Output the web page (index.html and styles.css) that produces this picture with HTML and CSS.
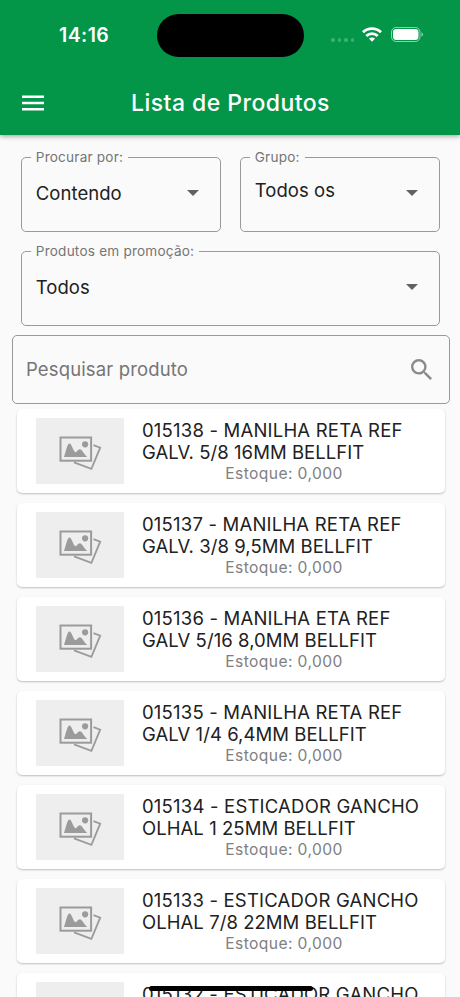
FILE: index.html
```html
<!DOCTYPE html>
<html lang="pt-BR">
<head>
<meta charset="utf-8">
<title>Lista de Produtos</title>
<link rel="stylesheet" href="styles.css">
</head>
<body>
<svg class="defs" width="0" height="0" aria-hidden="true">
  <symbol id="photos" viewBox="0 0 44 36">
    <path d="M34.5 9.2 41.2 11.7 32.4 32.8 15 26.4" fill="none" stroke="#9b9b9b" stroke-width="1.8"/>
    <rect x="1.500" y="1.500" width="30.6" height="23.2" fill="#eee" stroke="#9b9b9b" stroke-width="2"/>
    <path d="M5 21C7 15.500 8.300 7.500 10.500 7.500s3.700 7.500 5.500 8.500S18.500 13.200 20.800 13.200 25 18.500 28.300 21Z" fill="#9b9b9b"/>
    <circle cx="26.100" cy="8.300" r="3.100" fill="#9b9b9b"/>
  </symbol>
</svg>
<div class="screen">
  <header class="top">
    <div class="status">
      <span class="time">14:16</span>
      <span class="island"></span>
      <span class="signals">
        <span class="dots"><i></i><i></i><i></i><i></i></span>
        <svg class="wifi" width="20" height="15" viewBox="0 0 20 15" fill="none" stroke="#fff" stroke-width="2.800"><path d="M1 5.300C6 .5 14 .5 19 5.300"/><path d="M4.300 8.900C7.500 5.800 12.500 5.800 15.700 8.900"/><path d="M10 14.700 6.900 11.600C8.600 10 11.400 10 13.100 11.600Z" fill="#fff" stroke="none"/></svg>
        <svg class="battery" width="33" height="15" viewBox="0 0 33 15"><rect x=".5" y=".5" width="28.500" height="14" rx="4.500" fill="none" stroke="#fff" stroke-opacity=".55"/><rect x="2" y="2" width="25.500" height="11" rx="3.300" fill="#fff"/><path d="M30.500 5.300q1.500.7 1.500 2.200t-1.500 2.200z" fill="#fff" fill-opacity=".6"/></svg>
      </span>
    </div>
    <div class="bar">
      <svg class="menu" width="22" height="16" viewBox="0 0 22 16" fill="#fff"><path d="M0 .5h22v2.400H0zM0 6.800h22v2.400H0zM0 13.100h22v2.400H0z"/></svg>
      <h1>Lista de Produtos</h1>
    </div>
  </header>
  <form class="filters">
    <fieldset class="field"><legend>Procurar por:</legend><span>Contendo</span><b class="caret"></b></fieldset>
    <fieldset class="field group"><legend>Grupo:</legend><span>Todos os</span><b class="caret"></b></fieldset>
    <fieldset class="field wide"><legend>Produtos em promoção:</legend><span>Todos</span><b class="caret"></b></fieldset>
  </form>
  <div class="search">
    <span>Pesquisar produto</span>
    <svg width="21" height="21" viewBox="3 3 17.500 17.500" fill="#8a8a8a"><path d="M15.500 14h-.79l-.28-.27A6.471 6.471 0 0 0 16 9.500 6.500 6.500 0 1 0 9.500 16c1.610 0 3.090-.59 4.230-1.570l.27.28v.79l5 4.990L20.490 19l-4.990-5zm-6 0C7.010 14 5 11.990 5 9.500S7.010 5 9.500 5 14 7.010 14 9.500 11.990 14 9.500 14z"/></svg>
  </div>
  <main class="list">
    <article class="card"><div class="thumb"><svg><use href="#photos"/></svg></div><div class="info"><h2>015138 - MANILHA RETA REF<br>GALV. 5/8 16MM BELLFIT</h2><p>Estoque: 0,000</p></div></article>
    <article class="card"><div class="thumb"><svg><use href="#photos"/></svg></div><div class="info"><h2>015137 - MANILHA RETA REF<br>GALV. 3/8 9,5MM BELLFIT</h2><p>Estoque: 0,000</p></div></article>
    <article class="card"><div class="thumb"><svg><use href="#photos"/></svg></div><div class="info"><h2>015136 - MANILHA ETA REF<br>GALV 5/16 8,0MM BELLFIT</h2><p>Estoque: 0,000</p></div></article>
    <article class="card"><div class="thumb"><svg><use href="#photos"/></svg></div><div class="info"><h2>015135 - MANILHA RETA REF<br>GALV 1/4 6,4MM BELLFIT</h2><p>Estoque: 0,000</p></div></article>
    <article class="card"><div class="thumb"><svg><use href="#photos"/></svg></div><div class="info"><h2>015134 - ESTICADOR GANCHO<br>OLHAL 1 25MM BELLFIT</h2><p>Estoque: 0,000</p></div></article>
    <article class="card"><div class="thumb"><svg><use href="#photos"/></svg></div><div class="info"><h2>015133 - ESTICADOR GANCHO<br>OLHAL 7/8 22MM BELLFIT</h2><p>Estoque: 0,000</p></div></article>
    <article class="card"><div class="thumb"></div><div class="info"><h2>015132 - ESTICADOR GANCHO</h2></div></article>
  </main>
  <div class="home"></div>
</div>
</body>
</html>
```
FILE: styles.css
```css
* { box-sizing: border-box; }
body { margin: 0; font-family: Inter, "Liberation Sans", sans-serif; color: #212121; }
h1, h2, p { margin: 0; font-weight: 400; }
.defs { position: absolute; }
.screen { position: relative; width: 460px; height: 997px; overflow: hidden; background: #fafafa; display: flex; flex-direction: column; }
.top { height: 135px; flex: none; background: #039649; color: #fff; box-shadow: 0 1px 5px rgba(0,0,0,.4); }
.status { height: 70px; display: grid; grid-template-columns: 157px 147px 156px; align-items: center; }
.time { padding-left: 59px; font-size: 19.5px; font-weight: 600; letter-spacing: .4px; }
.island { height: 43px; border-radius: 22px; background: #000; }
.signals { display: flex; align-items: center; padding: 0 0 1px 27px; }
.dots { display: flex; gap: 3px; margin: 11px 8px 0 0; }
.dots i { width: 3.5px; height: 3.5px; border-radius: 1.5px; background: #3bb071; }
.battery { margin-left: 9px; }
.bar { height: 65px; display: grid; grid-template-columns: 22px 1fr 22px; align-items: center; padding: 0 22px; }
h1 { padding-left: 1px; text-align: center; font-size: 23px; line-height: 30px; font-weight: 500; letter-spacing: .45px; }
.filters { display: grid; grid-template-columns: 200px 200px; gap: 11px 19px; padding: 14px 0 0 21.4px; }
.field { height: 83px; min-width: 0; margin: 0; padding: 0 21px 0 13.4px; border: 1px solid #999; border-radius: 5px; display: flex; align-items: center; justify-content: space-between; font-size: 18.5px; letter-spacing: .05px; }
.field > * { margin-bottom: 10px; }
.field legend { margin: 0 0 0 -5px; padding: 0 5px; font-size: 13.6px; line-height: 16px; letter-spacing: .2px; color: #757575; }
.group span { margin-bottom: 16px; }
.wide { grid-column: 1 / 3; }
.caret { border: 6px solid transparent; border-top-color: #616161; border-bottom: 0; }
.search { height: 69px; flex: none; margin: 9px 10px 0 12px; padding: 0 17px 1px 13px; border: 1px solid #999; border-radius: 5px; display: flex; align-items: center; justify-content: space-between; font-size: 18.5px; letter-spacing: .14px; color: #757575; }
.list { flex: 1; min-height: 0; overflow: hidden; margin-top: 5px; padding: 0 15px 0 16.5px; display: flex; flex-direction: column; gap: 10px; }
.card { height: 84px; flex: none; display: flex; padding: 9px 0 0 19px; background: #fff; border-radius: 5px; box-shadow: 0 1px 2px rgba(0,0,0,.24); }
.thumb { width: 88px; height: 66px; background: #eee; padding: 18px 0 0 23px; }
.thumb svg { display: block; width: 44px; height: 36px; }
.info { width: 283px; margin-left: 18.5px; padding-top: 1px; }
h2 { font-size: 18.5px; line-height: 22.3px; letter-spacing: .06px; white-space: nowrap; }
h2::first-line { letter-spacing: .2px; }
p { padding: .6px 0 0 1px; text-align: center; font-size: 15.6px; line-height: 19px; letter-spacing: .4px; color: #808080; }
.home { position: absolute; left: 149px; top: 986px; width: 164px; height: 5px; border-radius: 3px; background: #000; }
```
